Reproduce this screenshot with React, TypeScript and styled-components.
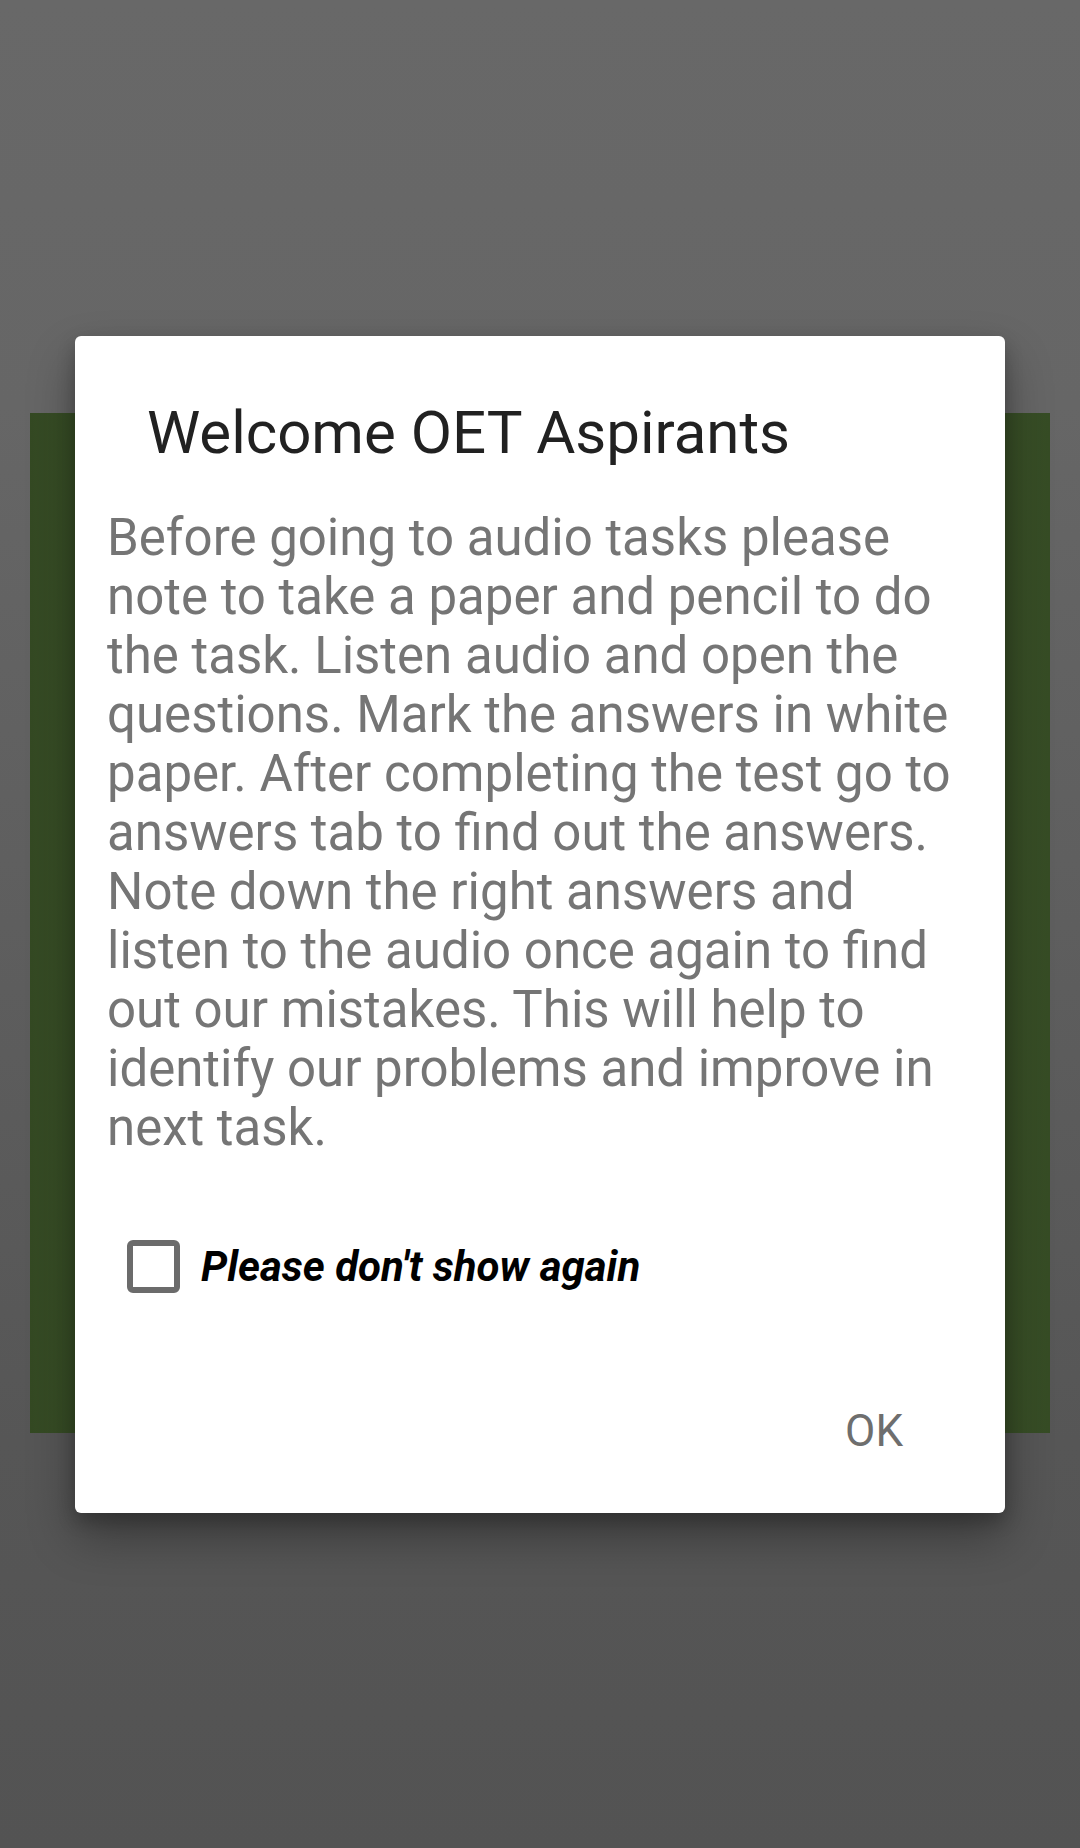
import styled, { createGlobalStyle } from "styled-components"
import { useState } from "react"

const GlobalStyle = createGlobalStyle`
    html, body {
        margin: 0;
        padding: 0;
    }
    body {
        font-family: Roboto, "Liberation Sans", sans-serif;
    }
`

const Screen = styled.div`
    position: relative;
    height: 1848px;
    box-sizing: border-box;
    padding: 413px 30px 0;
    background: linear-gradient(180deg, #686868 0%, #666666 22%, #565656 78%, #535353 100%);
    overflow: hidden;
`

const BackdropCard = styled.div`
    height: 1020px;
    background-color: #3a5128;
    background-image: linear-gradient(90deg, #344923 0%, #3a5128 6%, #3a5128 94%, #364c25 100%);
`

const Scrim = styled.div`
    position: absolute;
    inset: 0;
    display: flex;
    justify-content: center;
    align-items: center;
`

const Dialog = styled.div`
    width: 930px;
    box-sizing: border-box;
    background: #ffffff;
    border-radius: 6px;
    padding: 62px 32px 56px;
    display: flex;
    flex-direction: column;
    box-shadow: 0 24px 48px rgba(0, 0, 0, 0.32), 0 8px 18px rgba(0, 0, 0, 0.22);
`

const Title = styled.h2`
    margin: 0 0 40px;
    padding-left: 40px;
    font-size: 60px;
    line-height: 70px;
    font-weight: 400;
    color: #212121;
`

const Message = styled.p`
    margin: 0 0 83px;
    font-size: 51px;
    line-height: 59px;
    color: #757575;
`

const CheckRow = styled.label`
    display: flex;
    align-items: center;
    gap: 21px;
    padding-left: 20px;
    margin-bottom: 112px;
    cursor: pointer;
`

const CheckBox = styled.span<{ $checked: boolean }>`
    width: 53px;
    height: 53px;
    box-sizing: border-box;
    border: 6px solid #6b6b6b;
    border-radius: 6px;
    background: ${(p) => (p.$checked ? "#6b6b6b" : "transparent")};
    flex-shrink: 0;
`

const CheckLabel = styled.span`
    font-size: 42px;
    line-height: 53px;
    font-weight: 700;
    font-style: italic;
    color: #000000;
`

const Actions = styled.div`
    display: flex;
    justify-content: flex-end;
    padding-right: 70px;
`

const OkButton = styled.button`
    border: none;
    background: none;
    padding: 0;
    font-family: Roboto, "Liberation Sans", sans-serif;
    font-size: 44px;
    line-height: 52px;
    font-weight: 400;
    color: #6e6e6e;
    cursor: pointer;
`

export default function App() {
    const [naoMostrar, setNaoMostrar] = useState(false)

    return (
        <>
            <GlobalStyle />
            <Screen>
                <BackdropCard />
                <Scrim>
                    <Dialog>
                        <Title>Welcome OET Aspirants</Title>
                        <Message>
                            Before going to audio tasks please note to take a paper and pencil to do the task.
                            Listen audio and open the questions. Mark the answers in white paper. After
                            completing the test go to answers tab to find out the answers. Note down the right
                            answers and listen to the audio once again to find out our mistakes. This will help
                            to identify our problems and improve in next task.
                        </Message>
                        <CheckRow onClick={() => setNaoMostrar(!naoMostrar)}>
                            <CheckBox $checked={naoMostrar} />
                            <CheckLabel>Please don't show again</CheckLabel>
                        </CheckRow>
                        <Actions>
                            <OkButton>OK</OkButton>
                        </Actions>
                    </Dialog>
                </Scrim>
            </Screen>
        </>
    )
}
